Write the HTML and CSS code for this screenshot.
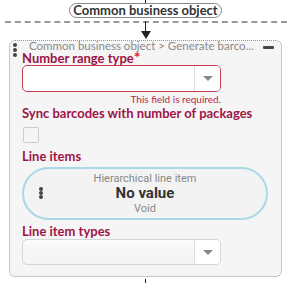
FILE: index.html
```html
<!DOCTYPE html>
<html lang="en">
<head>
    <meta charset="UTF-8">
    <meta name="viewport" content="width=device-width, initial-scale=1.0">
    <title>Generate barcodes</title>
    <link rel="stylesheet" href="styles.css">
</head>
<body>

    <!-- 위쪽 연결선 -->
    <div class="link-top"></div>
    <div class="pill-row"><span class="pill">Common business object</span></div>
    <div class="dash"></div>
    <div class="arrow">
        <div class="stem"></div>
        <div class="head"></div>
    </div>

    <div class="frame">
        <div class="handle"><i></i><i></i><i></i></div>

        <div class="frame-head">
            <span class="path">Common business object &gt; Generate barco...</span>
            <span class="minus"></span>
        </div>

        <div class="label first">Number range type<span class="req">*</span></div>
        <div class="select invalid">
            <div class="select-value"></div>
            <div class="select-btn"><span class="caret"></span></div>
        </div>
        <div class="error">This field is required.</div>

        <div class="label">Sync barcodes with number of packages</div>
        <div class="checkbox"></div>

        <div class="label gap">Line items</div>
        <div class="item-card">
            <div class="handle card-handle"><i></i><i></i><i></i></div>
            <div class="item-type">Hierarchical line item</div>
            <div class="item-value">No value</div>
            <div class="item-sub">Void</div>
        </div>

        <div class="label gap-small">Line item types</div>
        <div class="select">
            <div class="select-value"></div>
            <div class="select-btn"><span class="caret"></span></div>
        </div>
    </div>

    <div class="link-bottom"></div>

</body>
</html>
```

FILE: styles.css
```css
body {
    margin: 0;
    font-family: Lato, "Open Sans", sans-serif;
    background-color: #ffffff;
    width: 291px;
    height: 283px;
    overflow: hidden;
}

/* 연결선 */
.link-top {
    width: 1px;
    height: 3px;
    margin-left: 145px;
    background: #222;
}
.pill-row {
    display: flex;
    justify-content: center;
}
.pill {
    display: inline-block;
    border: 1px solid #888;
    border-radius: 8px;
    padding: 0 3px;
    font-size: 13px;
    font-weight: 700;
    line-height: 13px;
    color: #333;
    background: #fff;
}
.dash {
    height: 0;
    margin: 3px 4px 0 5px;
    border-top: 2px dashed #999;
}
.arrow {
    display: flex;
    flex-direction: column;
    align-items: center;
    width: 11px;
    margin-left: 140px;
    margin-top: -2px;
}
.stem {
    width: 1px;
    height: 10px;
    background: #222;
}
.head {
    width: 0;
    height: 0;
    border-left: 5px solid transparent;
    border-right: 5px solid transparent;
    border-top: 8px solid #222;
}

/* 프레임 */
.frame {
    position: relative;
    margin: 1px 9px 0 9px;
    height: 235px;
    border: 1px dotted #999;
    border-radius: 6px;
    background: #f5f5f5;
    padding: 0 7px 0 12px;
}
.handle {
    position: absolute;
    left: 3px;
    top: 2px;
    display: flex;
    flex-direction: column;
    gap: 1px;
}
.handle i {
    display: block;
    width: 4px;
    height: 4px;
    border-radius: 50%;
    background: #444;
}
.frame-head {
    display: flex;
    justify-content: space-between;
    align-items: center;
    height: 10px;
    padding-left: 7px;
}
.path {
    font-size: 11.5px;
    line-height: 10px;
    color: #8a8a8a;
    white-space: nowrap;
}
.minus {
    width: 11px;
    height: 3px;
    border-radius: 1px;
    background: #444;
    margin-top: 2px;
}

.label {
    font-size: 13px;
    font-weight: 700;
    line-height: 13px;
    color: #9e1446;
}
.label.first {
    margin-top: 1px;
}
.label.gap {
    margin-top: 7px;
}
.label.gap-small {
    margin-top: 5px;
}
.req {
    color: #e0183c;
    font-size: 16px;
    line-height: 0;
}

.select {
    display: flex;
    width: 197px;
    height: 24px;
    margin-top: 1px;
    border: 1px solid #d6d6d6;
    border-radius: 5px;
    background: linear-gradient(#fbfbfb, #f3f3f3);
    overflow: hidden;
}
.select.invalid {
    height: 25px;
    border-color: #c83a55;
    background: #fff;
    margin-top: 0;
}
.select-value {
    flex: 1;
}
.select-btn {
    width: 25px;
    border-left: 1px solid #ddd;
    display: flex;
    align-items: center;
    justify-content: center;
    background: #fff;
}
.caret {
    width: 0;
    height: 0;
    border-left: 5px solid transparent;
    border-right: 5px solid transparent;
    border-top: 5px solid #888;
}
.error {
    width: 199px;
    text-align: right;
    font-size: 10px;
    line-height: 13px;
    color: #b8284a;
    margin-top: 1px;
    margin-bottom: 1px;
}

.checkbox {
    width: 14px;
    height: 14px;
    margin: 7px 0 0 1px;
    border: 1px solid #ccc;
    border-radius: 2px;
    background: #f5f5f5;
}

/* 라인 아이템 카드 */
.item-card {
    position: relative;
    width: 242px;
    height: 49px;
    margin-top: 4px;
    border: 2px solid #a9d8e6;
    border-radius: 27px;
    background: #f3f3f3;
    text-align: center;
    font-family: Roboto, sans-serif;
}
.card-handle {
    left: 15px;
    top: 18px;
    gap: 0;
}
.card-handle i {
    width: 4px;
    height: 4px;
}
.item-type {
    margin-top: 3px;
    font-size: 11px;
    line-height: 13px;
    color: #888;
}
.item-value {
    font-size: 15px;
    font-weight: 700;
    line-height: 17px;
    color: #333;
}
.item-sub {
    font-size: 11px;
    line-height: 13px;
    color: #888;
}

.link-bottom {
    width: 1px;
    height: 6px;
    margin: 2px 0 0 145px;
    background: #222;
}
```
